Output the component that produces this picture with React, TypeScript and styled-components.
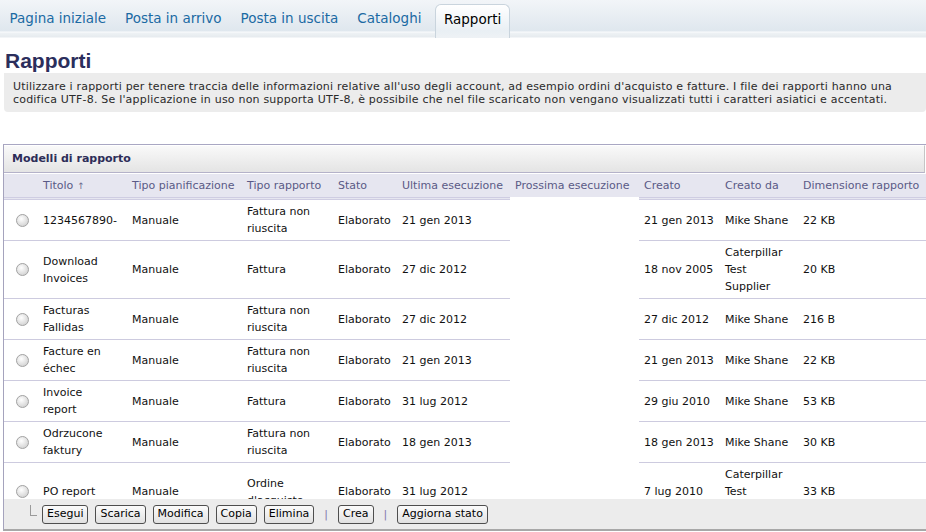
import React from "react";
import styled, { createGlobalStyle } from "styled-components";

const GlobalStyle = createGlobalStyle`
  html, body {
    margin: 0;
    padding: 0;
    background: #ffffff;
    overflow: hidden;
  }
  body {
    font-family: "DejaVu Sans", Verdana, sans-serif;
    font-size: 11px;
    color: #000;
  }
`;

interface IRow {
  title: string;
  schedule: string;
  type: string;
  status: string;
  lastRun: string;
  nextRun: string;
  created: string;
  createdBy: string;
  size: string;
}

const rows: IRow[] = [
  { title: "1234567890-", schedule: "Manuale", type: "Fattura non riuscita", status: "Elaborato", lastRun: "21 gen 2013", nextRun: "", created: "21 gen 2013", createdBy: "Mike Shane", size: "22 KB" },
  { title: "Download Invoices", schedule: "Manuale", type: "Fattura", status: "Elaborato", lastRun: "27 dic 2012", nextRun: "", created: "18 nov 2005", createdBy: "Caterpillar Test Supplier", size: "20 KB" },
  { title: "Facturas Fallidas", schedule: "Manuale", type: "Fattura non riuscita", status: "Elaborato", lastRun: "27 dic 2012", nextRun: "", created: "27 dic 2012", createdBy: "Mike Shane", size: "216 B" },
  { title: "Facture en échec", schedule: "Manuale", type: "Fattura non riuscita", status: "Elaborato", lastRun: "21 gen 2013", nextRun: "", created: "21 gen 2013", createdBy: "Mike Shane", size: "22 KB" },
  { title: "Invoice report", schedule: "Manuale", type: "Fattura", status: "Elaborato", lastRun: "31 lug 2012", nextRun: "", created: "29 giu 2010", createdBy: "Mike Shane", size: "53 KB" },
  { title: "Odrzucone faktury", schedule: "Manuale", type: "Fattura non riuscita", status: "Elaborato", lastRun: "18 gen 2013", nextRun: "", created: "18 gen 2013", createdBy: "Mike Shane", size: "30 KB" },
  { title: "PO report", schedule: "Manuale", type: "Ordine d'acquisto", status: "Elaborato", lastRun: "31 lug 2012", nextRun: "", created: "7 lug 2010", createdBy: "Caterpillar Test Supplier", size: "33 KB" },
];

const tabs = ["Pagina iniziale", "Posta in arrivo", "Posta in uscita", "Cataloghi", "Rapporti"];

const columns = [
  { label: "", width: 34 },
  { label: "Titolo", width: 89 },
  { label: "Tipo pianificazione", width: 115 },
  { label: "Tipo rapporto", width: 91 },
  { label: "Stato", width: 64 },
  { label: "Ultima esecuzione", width: 113 },
  { label: "Prossima esecuzione", width: 129, blank: true },
  { label: "Creato", width: 81 },
  { label: "Creato da", width: 78 },
  { label: "Dimensione rapporto", width: 129 },
];

const TabBar = styled.div`
  height: 38px;
  background: linear-gradient(#f2f5f8 0px, #dfe7ee 31px, #fbfcfd 32px, #eef2f5 33px, #e6ebef 37px, #ffffff 38px);
`;

const TabStrip = styled.div`
  display: flex;
  align-items: flex-end;
  height: 38px;
`;

const Tab = styled.div<{ active?: boolean }>`
  box-sizing: border-box;
  height: ${p => (p.active ? "34px" : "38px")};
  padding: ${p => (p.active ? "6px 8px 0 8px" : "10px 9.5px 0 9.5px")};
  margin-left: ${p => (p.active ? "4px" : "0")};
  font-size: 13.5px;
  line-height: 17px;
  white-space: nowrap;
  color: ${p => (p.active ? "#000000" : "#1b6aa3")};
  border: ${p => (p.active ? "1px solid #c9d4dd" : "none")};
  border-bottom: none;
  border-radius: ${p => (p.active ? "6px 6px 0 0" : "0")};
  background: ${p => (p.active ? "linear-gradient(#ffffff, #e9eff4 26px, #eef2f5)" : "transparent")};
`;

const Content = styled.div`
  padding-left: 4px;
`;

const Heading = styled.h1`
  margin: 11px 0 0 1px;
  font-family: "Liberation Sans", Arial, sans-serif;
  font-weight: bold;
  font-size: 21px;
  line-height: 24px;
  color: #2b2e5c;
`;

const Description = styled.div`
  padding: 7px 9px 6px 9px;
  background: #ececec;
  border-radius: 0 0 4px 4px;
  font-family: "DejaVu Sans", Tahoma, sans-serif;
  font-size: 11px;
  letter-spacing: 0.2px;
  line-height: 13px;
  color: #2a2a2a;
  white-space: nowrap;
`;

const Panel = styled.div`
  margin: 32px 0 0 -1px;
  border-left: 1px solid #a5a3bd;
  border-top: 1px solid #a9a7c3;
  border-bottom: 2px solid #a8a8a8;
`;

const PanelTitle = styled.div`
  height: 26px;
  padding-left: 8px;
  line-height: 26px;
  font-weight: bold;
  font-size: 11px;
  color: #2d2d58;
  background: linear-gradient(#f9f9f9, #e4e4e4);
  border-top: 1px solid #ffffff;
  border-bottom: 1px solid #b4b2c9;
  border-right: 1px solid #c5c5c5;
  margin-right: 1px;
`;

const Viewport = styled.div`
  height: 325px;
  overflow: hidden;
  padding-top: 1px;
`;

const Table = styled.table`
  border-collapse: collapse;
  table-layout: fixed;
  width: 923px;
`;

const HeadCell = styled.th<{ blank?: boolean }>`
  height: 23px;
  padding: 0 0 0 5px;
  text-align: left;
  font-weight: normal;
  font-size: 11px;
  color: #5a5a86;
  white-space: nowrap;
  background: #e6e6f0;
  border-bottom: ${p => (p.blank ? "3px solid #ffffff" : "3px double #cfcde2")};
`;

const Arrow = styled.span`
  margin-left: 4px;
  font-size: 9px;
  color: #6d6d8e;
`;

const Cell = styled.td<{ blank?: boolean }>`
  padding: 3px 4px 3px 5px;
  font-size: 11px;
  line-height: 17px;
  vertical-align: middle;
  color: #111;
  border-bottom: ${p => (p.blank ? "1px solid transparent" : "1px solid #cdcbdf")};
`;

const TitleCell = styled(Cell)`
  padding-right: 9px;
`;

const RadioCell = styled(Cell)`
  padding-left: 12px;
`;

const Radio = styled.span`
  display: block;
  width: 11px;
  height: 11px;
  border-radius: 50%;
  border: 1px solid #a3a3a3;
  background: radial-gradient(circle at 40% 35%, #ffffff 0%, #e6e6e6 45%, #c8c8c8 100%);
`;

const Footer = styled.div`
  display: flex;
  align-items: center;
  gap: 7px;
  height: 30px;
  padding-left: 26px;
  background: #ececec;
`;

const Elbow = styled.span`
  width: 6px;
  height: 10px;
  margin: -8px -2px 0 0;
  border-left: 1px solid #9a9a9a;
  border-bottom: 1px solid #9a9a9a;
`;

const ActionButton = styled.button`
  height: 19px;
  padding: 0 4px;
  font-family: "DejaVu Sans", Verdana, sans-serif;
  font-size: 11px;
  line-height: 16px;
  color: #000;
  border: 1px solid #4e4e4e;
  border-radius: 3px;
  background: linear-gradient(#fbfbfb, #e1e1e1);
  cursor: pointer;
`;

const Divider = styled.span`
  margin: 0 3px;
  font-size: 11px;
  color: #8379ad;
`;

function App() {
  return (
    <>
      <GlobalStyle />
      <TabBar>
        <TabStrip>
          {tabs.map(t => (
            <Tab key={t} active={t === "Rapporti"}>
              {t}
            </Tab>
          ))}
        </TabStrip>
      </TabBar>
      <Content>
        <Heading>Rapporti</Heading>
        <Description>
          Utilizzare i rapporti per tenere traccia delle informazioni relative all'uso degli account, ad esempio ordini d'acquisto e fatture. I file dei rapporti hanno una
          <br />
          codifica UTF-8. Se l'applicazione in uso non supporta UTF-8, è possibile che nel file scaricato non vengano visualizzati tutti i caratteri asiatici e accentati.
        </Description>
        <Panel>
          <PanelTitle>Modelli di rapporto</PanelTitle>
          <Viewport>
            <Table>
              <colgroup>
                {columns.map((c, i) => (
                  <col key={i} style={{ width: c.width }} />
                ))}
              </colgroup>
              <thead>
                <tr>
                  {columns.map((c, i) => (
                    <HeadCell key={i} blank={c.blank}>
                      {c.label}
                      {i === 1 && <Arrow>↑</Arrow>}
                    </HeadCell>
                  ))}
                </tr>
              </thead>
              <tbody>
                {rows.map(r => (
                  <tr key={r.title}>
                    <RadioCell>
                      <Radio />
                    </RadioCell>
                    <TitleCell>{r.title}</TitleCell>
                    <Cell>{r.schedule}</Cell>
                    <Cell>{r.type}</Cell>
                    <Cell>{r.status}</Cell>
                    <Cell>{r.lastRun}</Cell>
                    <Cell blank>{r.nextRun}</Cell>
                    <Cell>{r.created}</Cell>
                    <Cell>{r.createdBy}</Cell>
                    <Cell>{r.size}</Cell>
                  </tr>
                ))}
              </tbody>
            </Table>
          </Viewport>
          <Footer>
            <Elbow />
            <ActionButton>Esegui</ActionButton>
            <ActionButton>Scarica</ActionButton>
            <ActionButton>Modifica</ActionButton>
            <ActionButton>Copia</ActionButton>
            <ActionButton>Elimina</ActionButton>
            <Divider>|</Divider>
            <ActionButton>Crea</ActionButton>
            <Divider>|</Divider>
            <ActionButton>Aggiorna stato</ActionButton>
          </Footer>
        </Panel>
      </Content>
    </>
  );
}

export default App;
